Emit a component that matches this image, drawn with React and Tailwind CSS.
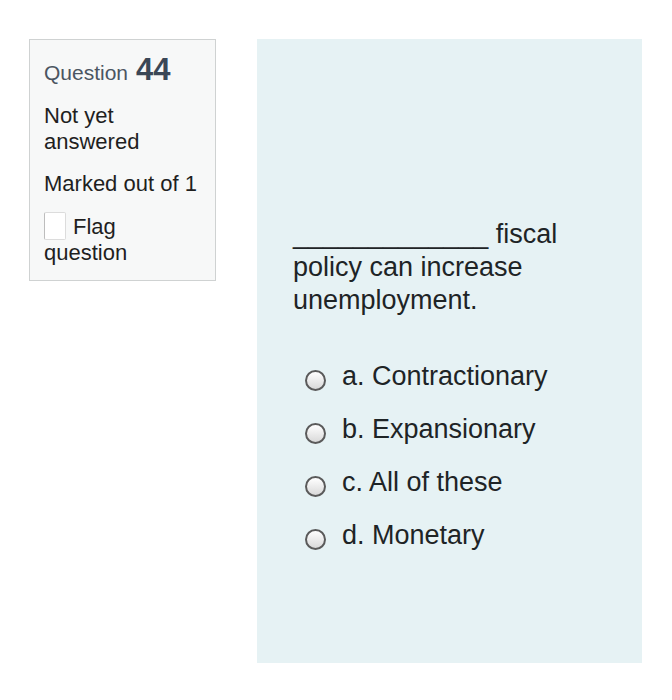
const options = ["a. Contractionary", "b. Expansionary", "c. All of these", "d. Monetary"];

function Radio() {
    return (
        <span className="mt-[8px] mr-[16px] inline-block h-[21px] w-[21px] shrink-0 rounded-full border-[2px] border-[#5a5a5a] bg-gradient-to-b from-[#ffffff] to-[#d9d9d9]" />
    );
}

export default function App() {
    return (
        <div className="flex h-[700px] w-[672px] items-start bg-white pl-[29px] pt-[39px] font-['Liberation_Sans',Arial,sans-serif]">
            <div className="h-[242px] w-[187px] shrink-0 border border-[#cfd2d2] bg-[#f7f8f8] pl-[14px] pt-[14px] text-[#1f1f1f]">
                <h3 className="flex items-baseline text-[21px] leading-[32px] text-[#4b5561]">
                    Question
                    <span className="ml-[8px] text-[31px] font-bold text-[#3b4756]">44</span>
                </h3>
                <div className="mt-[14px] text-[22px] leading-[26px]">
                    Not yet
                    <br />
                    answered
                </div>
                <div className="mt-[16px] text-[22px] leading-[26px]">Marked out of 1</div>
                <div className="mt-[9px] text-[22px] leading-[26px]">
                    <span className="mr-[7px] inline-block h-[28px] w-[22px] translate-y-[6px] rounded-[2px] border border-[#dcdcdc] border-l-[#bdbdbd] bg-white" />
                    Flag
                    <br />
                    question
                </div>
            </div>
            <div className="ml-[41px] h-[624px] w-[385px] shrink-0 bg-[#e6f2f4] pl-[36px] pt-[179px] text-[#1e2426]">
                <p className="w-[300px] text-[27px] leading-[33px]">
                    _____________ fiscal policy can increase unemployment.
                </p>
                <div className="mt-[33px] flex flex-col pl-[12px]">
                    {options.map((o) => (
                        <label key={o} className="flex h-[53px] items-center text-[27px] leading-[53px]">
                            <Radio />
                            {o}
                        </label>
                    ))}
                </div>
            </div>
        </div>
    );
}
